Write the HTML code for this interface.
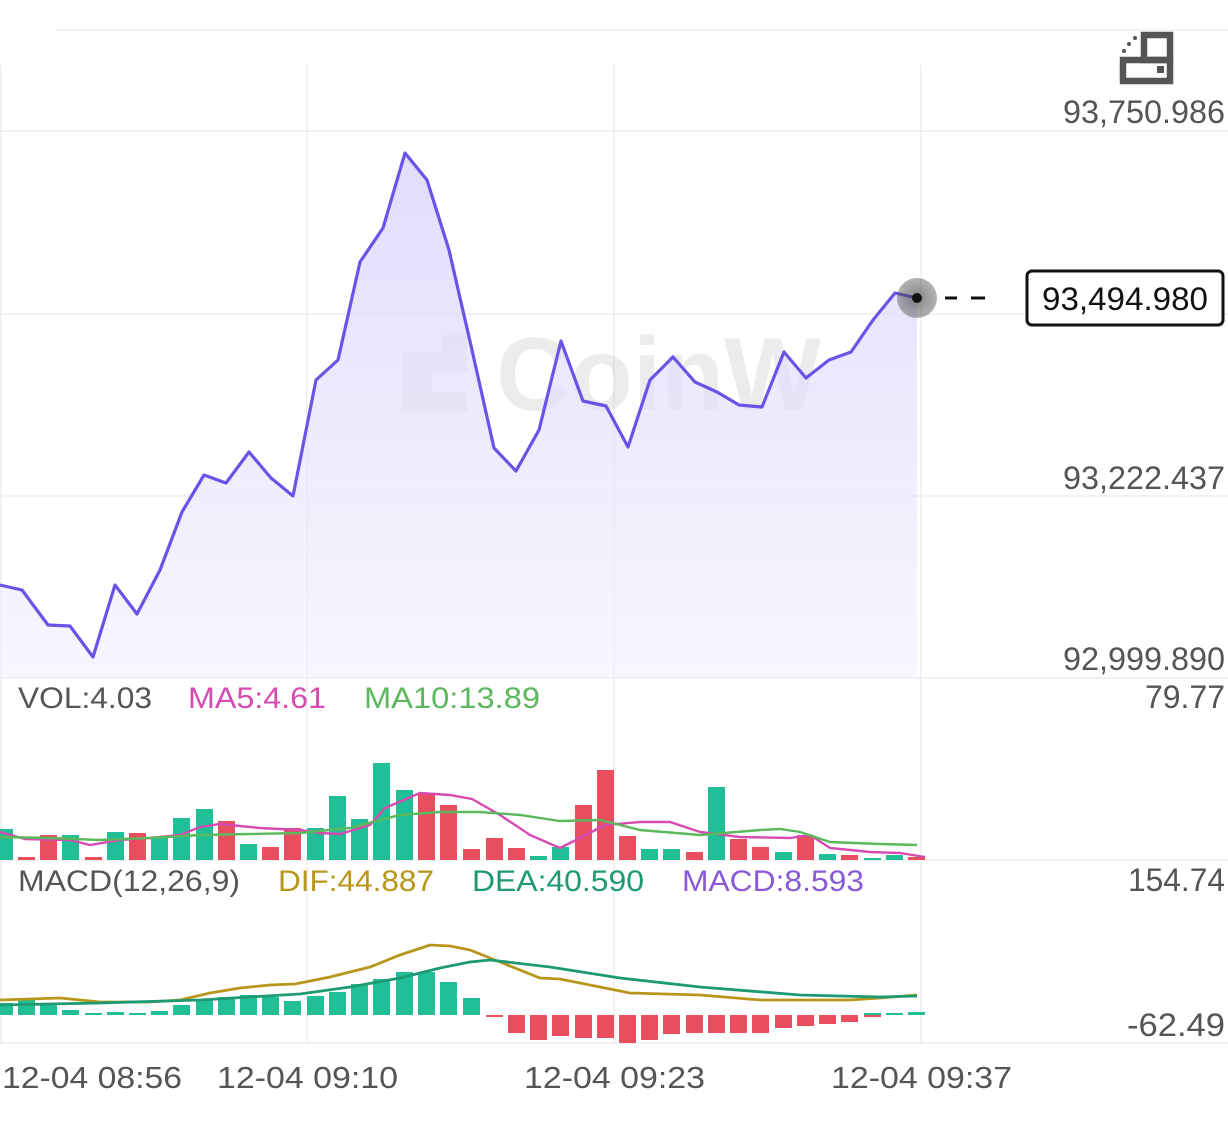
<!DOCTYPE html>
<html><head><meta charset="utf-8"><style>
html,body{margin:0;padding:0;background:#fff;}
svg{display:block;font-family:"Liberation Sans",sans-serif;}
</style></head><body>
<svg width="1228" height="1134" viewBox="0 0 1228 1134" xmlns="http://www.w3.org/2000/svg">
<defs>
<linearGradient id="g" x1="0" y1="0" x2="0" y2="1">
<stop offset="0" stop-color="#d9d0fb" stop-opacity="0.75"/>
<stop offset="1" stop-color="#f3f0fd" stop-opacity="0.6"/>
</linearGradient>
<radialGradient id="dot"><stop offset="0" stop-color="#333" stop-opacity="0.8"/><stop offset="1" stop-color="#555" stop-opacity="0.6"/></radialGradient>
</defs>
<g stroke="#eeeeee" stroke-width="1.5" fill="none">
<line x1="55" y1="30" x2="1228" y2="30"/>
<line x1="0" y1="131" x2="1228" y2="131"/>
<line x1="0" y1="314" x2="1228" y2="314"/>
<line x1="0" y1="496" x2="1228" y2="496"/>
<line x1="0" y1="678" x2="1228" y2="678"/>
<line x1="0" y1="860" x2="1228" y2="860"/>
<line x1="0" y1="1043" x2="1228" y2="1043"/>
<line x1="1" y1="65" x2="1" y2="1043"/>
<line x1="307" y1="65" x2="307" y2="1043"/>
<line x1="614" y1="65" x2="614" y2="1043"/>
<line x1="921" y1="65" x2="921" y2="1043"/>
</g>
<g fill="none" stroke="#555" stroke-width="6.5">
<rect x="1123" y="60" width="47" height="21"/>
<rect x="1144" y="35" width="26" height="25"/>
</g>
<rect x="1157" y="66" width="7" height="7" fill="#555"/>
<g fill="#555"><circle cx="1124" cy="51" r="2"/><circle cx="1129" cy="44" r="2"/><circle cx="1135" cy="38" r="2"/></g>
<g fill="#000" opacity="0.07">
<path d="M402 353 h40 v-18 h25 v38 h-35 v20 h35 v18 h-65z"/>
<text x="496" y="410" font-size="104" font-weight="bold" textLength="325" lengthAdjust="spacingAndGlyphs">CoinW</text>
</g>
<path fill="url(#g)" d="M0,585 L22,590 L48,625 L70,626 L93,657 L115,585 L137,614 L160,570 L182,512 L204,475 L226,483 L249,452 L271,478 L293,496 L316,380 L338,360 L360,262 L383,228 L405,153 L427,180 L449,250 L472,350 L494,448 L516,471 L539,430 L561,341 L583,401 L606,406 L628,447 L650,380 L673,357 L695,382 L717,392 L739,405 L762,407 L784,352 L806,378 L829,360 L851,352 L873,320 L895,293 L917,298 L917,678 L0,678Z"/>
<path fill="none" stroke="#6c52e6" stroke-width="3.2" stroke-linejoin="round" d="M0,585 L22,590 L48,625 L70,626 L93,657 L115,585 L137,614 L160,570 L182,512 L204,475 L226,483 L249,452 L271,478 L293,496 L316,380 L338,360 L360,262 L383,228 L405,153 L427,180 L449,250 L472,350 L494,448 L516,471 L539,430 L561,341 L583,401 L606,406 L628,447 L650,380 L673,357 L695,382 L717,392 L739,405 L762,407 L784,352 L806,378 L829,360 L851,352 L873,320 L895,293 L917,298"/>
<circle cx="917" cy="298" r="20" fill="url(#dot)" opacity="0.75"/>
<circle cx="917" cy="298" r="5" fill="#111"/>
<g stroke="#111" stroke-width="3"><line x1="945" y1="298" x2="957" y2="298"/><line x1="971" y1="298" x2="985" y2="298"/></g>
<rect x="1027" y="271" width="196" height="54" rx="5" fill="#fff" stroke="#111" stroke-width="3"/>
<text x="1125" y="310" font-size="32" fill="#111" text-anchor="middle" textLength="166" lengthAdjust="spacingAndGlyphs">93,494.980</text>
<g font-size="32" fill="#555" text-anchor="end">
<text x="1225" y="123" textLength="162" lengthAdjust="spacingAndGlyphs">93,750.986</text>
<text x="1225" y="489" textLength="162" lengthAdjust="spacingAndGlyphs">93,222.437</text>
<text x="1225" y="670" textLength="162" lengthAdjust="spacingAndGlyphs">92,999.890</text>
<text x="1225" y="708" textLength="80" lengthAdjust="spacingAndGlyphs">79.77</text>
<text x="1225" y="891" textLength="97" lengthAdjust="spacingAndGlyphs">154.74</text>
<text x="1225" y="1036" textLength="98" lengthAdjust="spacingAndGlyphs">-62.49</text>
</g>
<g font-size="30">
<text x="18" y="708" fill="#555" textLength="134" lengthAdjust="spacingAndGlyphs">VOL:4.03</text>
<text x="188" y="708" fill="#d64bb1" textLength="138" lengthAdjust="spacingAndGlyphs">MA5:4.61</text>
<text x="364" y="708" fill="#5cb85c" textLength="176" lengthAdjust="spacingAndGlyphs">MA10:13.89</text>
<text x="18" y="891" fill="#555" textLength="222" lengthAdjust="spacingAndGlyphs">MACD(12,26,9)</text>
<text x="278" y="891" fill="#b8961c" textLength="156" lengthAdjust="spacingAndGlyphs">DIF:44.887</text>
<text x="472" y="891" fill="#1d9a72" textLength="172" lengthAdjust="spacingAndGlyphs">DEA:40.590</text>
<text x="682" y="891" fill="#8a5ad6" textLength="182" lengthAdjust="spacingAndGlyphs">MACD:8.593</text>
</g>
<g>
<rect x="-4" y="829" width="17" height="31" fill="#21bf98"/>
<rect x="18" y="857" width="17" height="3" fill="#e84e5e"/>
<rect x="40" y="835" width="17" height="25" fill="#e84e5e"/>
<rect x="62" y="835" width="17" height="25" fill="#21bf98"/>
<rect x="85" y="857" width="17" height="3" fill="#e84e5e"/>
<rect x="107" y="832" width="17" height="28" fill="#21bf98"/>
<rect x="129" y="833" width="17" height="27" fill="#e84e5e"/>
<rect x="151" y="837" width="17" height="23" fill="#21bf98"/>
<rect x="173" y="818" width="17" height="42" fill="#21bf98"/>
<rect x="196" y="809" width="17" height="51" fill="#21bf98"/>
<rect x="218" y="821" width="17" height="39" fill="#e84e5e"/>
<rect x="240" y="844" width="17" height="16" fill="#21bf98"/>
<rect x="262" y="847" width="17" height="13" fill="#e84e5e"/>
<rect x="284" y="828" width="17" height="32" fill="#e84e5e"/>
<rect x="307" y="828" width="17" height="32" fill="#21bf98"/>
<rect x="329" y="796" width="17" height="64" fill="#21bf98"/>
<rect x="351" y="819" width="17" height="41" fill="#21bf98"/>
<rect x="373" y="763" width="17" height="97" fill="#21bf98"/>
<rect x="396" y="790" width="17" height="70" fill="#21bf98"/>
<rect x="418" y="793" width="17" height="67" fill="#e84e5e"/>
<rect x="440" y="805" width="17" height="55" fill="#e84e5e"/>
<rect x="463" y="849" width="17" height="11" fill="#e84e5e"/>
<rect x="486" y="838" width="17" height="22" fill="#e84e5e"/>
<rect x="508" y="848" width="17" height="12" fill="#e84e5e"/>
<rect x="530" y="856" width="17" height="4" fill="#21bf98"/>
<rect x="552" y="847" width="17" height="13" fill="#21bf98"/>
<rect x="575" y="805" width="17" height="55" fill="#e84e5e"/>
<rect x="597" y="770" width="17" height="90" fill="#e84e5e"/>
<rect x="619" y="836" width="17" height="24" fill="#e84e5e"/>
<rect x="641" y="849" width="17" height="11" fill="#21bf98"/>
<rect x="663" y="849" width="17" height="11" fill="#21bf98"/>
<rect x="686" y="852" width="17" height="8" fill="#e84e5e"/>
<rect x="708" y="787" width="17" height="73" fill="#21bf98"/>
<rect x="730" y="839" width="17" height="21" fill="#e84e5e"/>
<rect x="752" y="847" width="17" height="13" fill="#e84e5e"/>
<rect x="775" y="852" width="17" height="8" fill="#21bf98"/>
<rect x="797" y="835" width="17" height="25" fill="#e84e5e"/>
<rect x="819" y="854" width="17" height="6" fill="#21bf98"/>
<rect x="841" y="855" width="17" height="5" fill="#e84e5e"/>
<rect x="864" y="858" width="17" height="2" fill="#21bf98"/>
<rect x="886" y="855" width="17" height="5" fill="#21bf98"/>
<rect x="908" y="857" width="17" height="3" fill="#e84e5e"/>
</g>
<path fill="none" stroke="#d64bb1" stroke-width="2.4" d="M0,832 L25,839 L70,840 L90,845 L120,840 L150,838 L180,835 L200,827 L220,824 L260,828 L300,830 L320,833 L340,834 L370,825 L385,808 L420,793 L450,795 L472,799 L500,815 L530,835 L560,848 L580,838 L605,825 L640,822 L670,822 L700,832 L740,837 L790,838 L810,835 L830,848 L870,852 L900,853 L925,857"/>
<path fill="none" stroke="#5cb85c" stroke-width="2.4" d="M0,837 L50,838 L100,840 L150,838 L200,835 L250,834 L300,833 L350,828 L380,820 L400,815 L440,812 L480,812 L520,815 L560,821 L600,820 L640,830 L700,835 L760,830 L780,829 L800,832 L830,842 L880,844 L917,845"/>
<g fill="#21bf98">
<rect x="-4" y="1003" width="17" height="12"/>
<rect x="18" y="1000" width="17" height="15"/>
<rect x="40" y="1005" width="17" height="10"/>
<rect x="62" y="1010" width="17" height="5"/>
<rect x="85" y="1013" width="17" height="2"/>
<rect x="107" y="1012" width="17" height="3"/>
<rect x="129" y="1013" width="17" height="2"/>
<rect x="151" y="1011" width="17" height="4"/>
<rect x="173" y="1005" width="17" height="10"/>
<rect x="196" y="1000" width="17" height="15"/>
<rect x="218" y="997" width="17" height="18"/>
<rect x="240" y="995" width="17" height="20"/>
<rect x="262" y="997" width="17" height="18"/>
<rect x="284" y="1001" width="17" height="14"/>
<rect x="307" y="996" width="17" height="19"/>
<rect x="329" y="992" width="17" height="23"/>
<rect x="351" y="984" width="17" height="31"/>
<rect x="373" y="979" width="17" height="36"/>
<rect x="396" y="972" width="17" height="43"/>
<rect x="418" y="972" width="17" height="43"/>
<rect x="440" y="982" width="17" height="33"/>
<rect x="463" y="998" width="17" height="17"/>
<rect x="864" y="1013" width="17" height="2"/>
<rect x="886" y="1013" width="17" height="2"/>
<rect x="908" y="1012" width="17" height="3"/>
</g>
<g fill="#e84e5e">
<rect x="486" y="1015" width="17" height="2"/>
<rect x="508" y="1015" width="17" height="18"/>
<rect x="530" y="1015" width="17" height="25"/>
<rect x="552" y="1015" width="17" height="21"/>
<rect x="575" y="1015" width="17" height="23"/>
<rect x="597" y="1015" width="17" height="23"/>
<rect x="619" y="1015" width="17" height="28"/>
<rect x="641" y="1015" width="17" height="25"/>
<rect x="663" y="1015" width="17" height="19"/>
<rect x="686" y="1015" width="17" height="18"/>
<rect x="708" y="1015" width="17" height="18"/>
<rect x="730" y="1015" width="17" height="18"/>
<rect x="752" y="1015" width="17" height="18"/>
<rect x="775" y="1015" width="17" height="13"/>
<rect x="797" y="1015" width="17" height="11"/>
<rect x="819" y="1015" width="17" height="9"/>
<rect x="841" y="1015" width="17" height="7"/>
<rect x="864" y="1015" width="17" height="2"/>
</g>
<path fill="none" stroke="#b8961c" stroke-width="2.8" d="M0,1000 L30,999 L60,998 L100,1002 L150,1002 L180,1000 L210,993 L240,988 L270,985 L295,984 L330,977 L370,967 L400,955 L430,945 L450,946 L470,950 L500,962 L540,978 L560,979 L600,987 L630,993 L700,995 L760,1000 L800,1000 L850,1000 L880,998 L917,995"/>
<path fill="none" stroke="#1d9a72" stroke-width="2.8" d="M0,1005 L100,1003 L200,1000 L300,994 L350,987 L400,978 L440,968 L470,962 L490,960 L550,967 L620,978 L700,987 L800,995 L880,997 L917,996"/>
<g font-size="31" fill="#555">
<text x="2" y="1088" textLength="180" lengthAdjust="spacingAndGlyphs">12-04 08:56</text>
<text x="217" y="1088" textLength="181" lengthAdjust="spacingAndGlyphs">12-04 09:10</text>
<text x="524" y="1088" textLength="181" lengthAdjust="spacingAndGlyphs">12-04 09:23</text>
<text x="831" y="1088" textLength="181" lengthAdjust="spacingAndGlyphs">12-04 09:37</text>
</g>
</svg>
</body></html>
